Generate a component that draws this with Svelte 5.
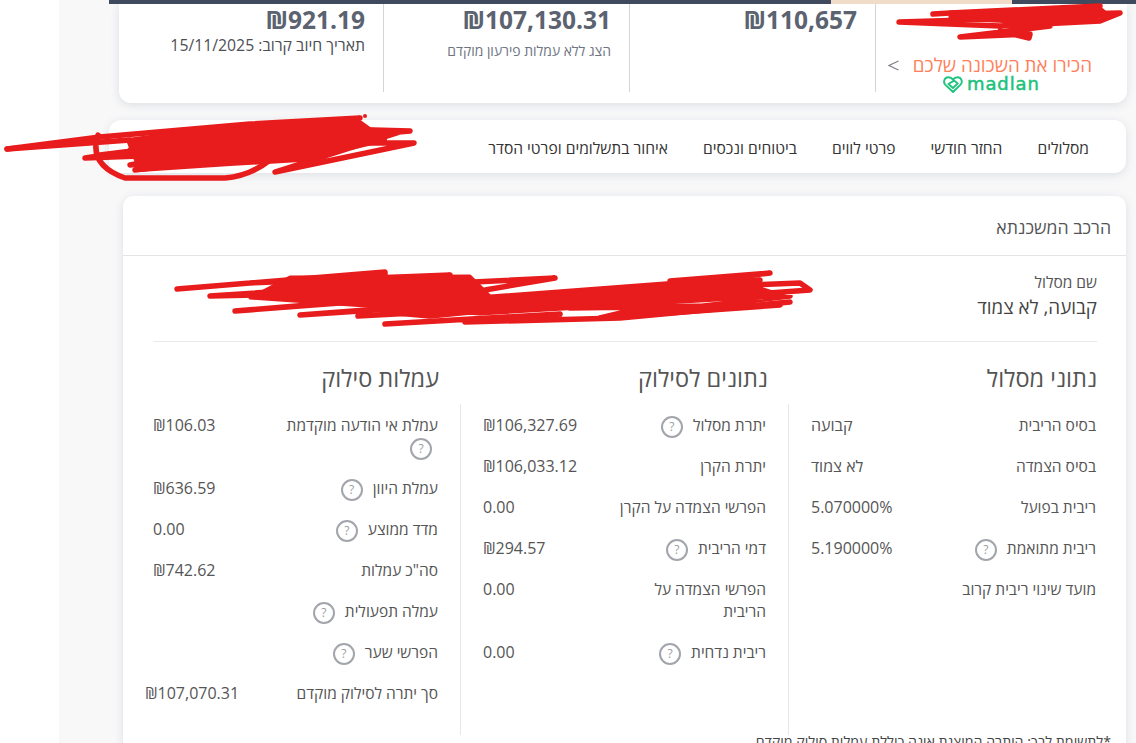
<script lang="ts">
	type Row = { label: string; value?: string; help?: boolean; wide?: boolean };

	const summary = [
		{ amount: '₪110,657' },
		{ amount: '₪107,130.31', note: 'הצג ללא עמלות פירעון מוקדם' },
		{ amount: '₪921.19', date: 'תאריך חיוב קרוב: 15/11/2025' }
	];

	const tabs = ['מסלולים', 'החזר חודשי', 'פרטי לווים', 'ביטוחים ונכסים', 'איחור בתשלומים ופרטי הסדר'];

	const columns: { title: string; rows: Row[] }[] = [
		{
			title: 'נתוני מסלול',
			rows: [
				{ label: 'בסיס הריבית', value: 'קבועה' },
				{ label: 'בסיס הצמדה', value: 'לא צמוד' },
				{ label: 'ריבית בפועל', value: '5.070000%' },
				{ label: 'ריבית מתואמת', value: '5.190000%', help: true },
				{ label: 'מועד שינוי ריבית קרוב' }
			]
		},
		{
			title: 'נתונים לסילוק',
			rows: [
				{ label: 'יתרת מסלול', value: '₪106,327.69', help: true },
				{ label: 'יתרת הקרן', value: '₪106,033.12' },
				{ label: 'הפרשי הצמדה על הקרן', value: '0.00' },
				{ label: 'דמי הריבית', value: '₪294.57', help: true },
				{ label: 'הפרשי הצמדה על הריבית', value: '0.00' },
				{ label: 'ריבית נדחית', value: '0.00', help: true }
			]
		},
		{
			title: 'עמלות סילוק',
			rows: [
				{ label: 'עמלת אי הודעה מוקדמת', value: '₪106.03', help: true },
				{ label: 'עמלת היוון', value: '₪636.59', help: true },
				{ label: 'מדד ממוצע', value: '0.00', help: true },
				{ label: 'סה"כ עמלות', value: '₪742.62' },
				{ label: 'עמלה תפעולית', help: true },
				{ label: 'הפרשי שער', help: true },
				{ label: 'סך יתרה לסילוק מוקדם', value: '₪107,070.31', wide: true }
			]
		}
	];

	// the red marker scribbles on top of the screenshot
	const scribbles = [
		'M933 14 L950 13 L1100 6 L1098 10 L1000 16 L1120 13 L1100 21 L1000 26 L899 22 L1040 18 M1050 26 L960 37 L1030 34 L1029 38 L1000 31',
		'M7 149 L100 137 L250 124 L360 118 L300 128 L410 131 L270 143 L414 143 L275 172 L400 132 L130 165 L340 125 L100 155 L360 135 L135 170 L300 150 L85 158 L330 122 L140 140 L350 148 L200 160 L370 130 L130 150',
		'M7 149 L130 140 M98 135 Q88 165 125 178 L225 178 Q250 176 270 160',
		'M177 289 L385 272 L385 276 L250 283 L450 275 L300 290 L210 296 L485 290 L555 278 L350 288 L485 292 L235 311 L345 302 L500 300 L300 315 L600 295 L690 290 L430 316 L385 312 L600 306 L650 298',
		'M670 281 L770 273 L630 290 L800 283 L810 290 L570 308 L780 305 L640 315 L700 285 L540 300 L760 280 L600 318 L790 296 L470 305',
		'M358 316 L470 310 M385 324 L560 314 M465 322 L620 318 L790 302'
	];
</script>

<div class="page" dir="rtl">
	<div class="side"></div>
	<main>
		<div class="strip"><i class="dark a"></i><i class="peach"></i><i class="dark b"></i></div>

		<section class="summary">
			<div class="cell promo">
				<a href="#madlan" class="promo-link">
					<span>הכירו את השכונה שלכם</span>
					<svg width="11" height="11" viewBox="0 0 11 11" fill="none" stroke="#7b808a" stroke-width="1.1">
						<path d="M10.5 1 L1 5.5 L10.5 10" />
					</svg>
				</a>
				<div class="madlan">
					<svg width="20" height="17" viewBox="0 0 20 17" fill="none" stroke="#1fc47f" stroke-width="1.9" stroke-linejoin="round">
						<path d="M10 16 L2.2 8.6 C-0.2 6 1.6 1.2 5.4 1.2 C7.4 1.2 9 2.2 10 3.6 C11 2.2 12.6 1.2 14.6 1.2 C18.4 1.2 20 6 17.6 8.6 Z" />
						<path d="M5.4 8 L10 12 L14.8 7.4 L11 4.6 L5.4 8 Z" />
					</svg>
					<span class="madlan-word">madlan</span>
				</div>
			</div>
			{#each summary as item}
				<div class="cell">
					<div class="amount" dir="ltr">{item.amount}</div>
					{#if item.note}<div class="note">{item.note}</div>{/if}
					{#if item.date}<div class="date">{item.date}</div>{/if}
				</div>
			{/each}
		</section>

		<nav aria-label="ניווט">
			{#each tabs as tab}
				<a href="#tab">{tab}</a>
			{/each}
		</nav>

		<section class="card">
			<h2>הרכב המשכנתא</h2>
			<div class="body">
				<div class="track">
					<div class="track-label">שם מסלול</div>
					<div class="track-name">קבועה, לא צמוד</div>
				</div>

				<div class="titles">
					{#each columns as col}
						<h3>{col.title}</h3>
					{/each}
				</div>

				<div class="cols">
					{#each columns as col}
						<div class="col">
							{#each col.rows as row}
								<div class="row">
									<div class="label">
										{row.label} {#if row.help}<span class="help">?</span>{/if}
									</div>
									{#if row.value}
										<div class="value" class:wide={row.wide} dir={/[א-ת]/.test(row.value) ? 'rtl' : 'ltr'}>{row.value}</div>
									{/if}
								</div>
							{/each}
						</div>
					{/each}
				</div>
				<p class="foot">*לתשומת לבך: היתרה המוצגת אינה כוללת עמלות סילוק מוקדם</p>
			</div>
		</section>
	</main>

	<svg class="marker" width="1136" height="743" viewBox="0 0 1136 743" fill="none" stroke="#e81c1c" stroke-linecap="round" stroke-linejoin="round" aria-hidden="true">
		{#each scribbles as d}
			<path {d} stroke-width="5.5" />
		{/each}
		<path d="M128 140 L230 126 L360 122 L385 140 L300 160 L230 164 L140 170 Z" fill="#e81c1c" stroke-width="4" />
		<path d="M950 12 L1100 8 L1110 16 L1040 24 L950 18 Z" fill="#e81c1c" stroke-width="3" />
		<path d="M290 277 L470 276 L490 296 L730 278 L785 296 L480 314 L250 298 Z" fill="#e81c1c" stroke-width="3" />
		<circle cx="365" cy="116" r="2" fill="#e81c1c" stroke="none" />
	</svg>
</div>

<style>
	:global(body) {
		background: #fff;
		font-family: 'Open Sans', 'Noto Sans', sans-serif;
	}

	.page {
		display: flex;
		height: 743px;
		overflow: hidden;
		position: relative;
	}

	.side {
		background: #fff;
		flex: 0 0 59px;
		order: 2;
	}

	main {
		background: #f8f8f9;
		flex: 1;
		min-width: 0;
	}

	.strip {
		display: flex;
		height: 4px;
		margin-left: 50px;
	}

	.strip .dark {
		background: #404a5e;
	}

	.strip .a {
		flex: 0 0 124px;
	}

	.strip .peach {
		background: #f0dcc9;
		flex: 0 0 181px;
	}

	.strip .b {
		flex: 1;
	}

	.summary {
		background: #fff;
		border-radius: 0 0 12px 12px;
		box-shadow: 0 2px 10px rgba(60, 70, 90, 0.14);
		display: flex;
		height: 99px;
		margin: 0 9px 0 60px;
	}

	.cell {
		border-left: 1px solid #d4d4d4;
		box-sizing: border-box;
		flex: 0 0 246px;
		height: 88px;
		padding: 1px 18px 0 0;
	}

	.cell:last-child {
		border-left: 0;
		flex: 1;
	}

	.promo {
		flex: 0 0 252px;
		padding: 0;
	}

	.promo-link {
		align-items: center;
		color: #ff7f5c;
		display: flex;
		font-size: 18.8px;
		gap: 14px;
		line-height: 20px;
		margin-top: 51px;
		padding-right: 35px;
		text-decoration: none;
	}

	.madlan {
		align-items: center;
		direction: ltr;
		display: flex;
		gap: 4px;
		height: 18px;
		margin: 0 0 0 67px;
	}

	.madlan-word {
		color: #1cc27c;
		font-family: 'DejaVu Sans', sans-serif;
		font-size: 18px;
		-webkit-text-stroke: 0.5px #1cc27c;
		letter-spacing: 0.9px;
		line-height: 18px;
	}

	.amount {
		color: #5b6270;
		font-size: 24.5px;
		font-weight: 700;
		line-height: 30px;
		text-align: right;
	}

	.note {
		color: #6d7482;
		font-size: 13.9px;
		line-height: 20px;
		margin-top: 6px;
	}

	.date {
		color: #4d4f55;
		font-size: 15.8px;
		line-height: 20px;
	}

	nav {
		align-items: center;
		background: #fff;
		border-radius: 12px;
		box-shadow: 0 2px 10px rgba(60, 70, 90, 0.14);
		box-sizing: border-box;
		display: flex;
		gap: 35px;
		height: 53px;
		margin: 17px 10px 0 50px;
		padding: 2px 37px 0 0;
	}

	nav a {
		color: #333;
		font-size: 15.6px;
		text-decoration: none;
	}

	.card {
		background: #fff;
		border-radius: 10px 10px 0 0;
		box-shadow: 0 2px 10px rgba(60, 70, 90, 0.14);
		height: 560px;
		margin: 23px 10px 0 64px;
	}

	h2 {
		border-bottom: 1px solid #e4e4e4;
		box-sizing: border-box;
		color: #555;
		font-size: 17.7px;
		font-weight: 400;
		height: 60px;
		line-height: 63px;
		margin: 0;
		padding-right: 15px;
	}

	.body {
		margin: 0 29px 0 30px;
	}

	.track {
		border-bottom: 1px solid #eaeaea;
		box-sizing: border-box;
		height: 86px;
		padding-top: 14px;
	}

	.track-label {
		color: #555;
		font-size: 15.5px;
		line-height: 24px;
	}

	.track-name {
		color: #444;
		font-size: 18.8px;
		line-height: 26px;
	}

	.titles,
	.cols {
		display: grid;
	}

	.titles {
		grid-template-columns: 308px 328px 308px;
		height: 62px;
	}

	.cols {
		grid-template-columns: 309px 328px 307px;
		height: 331px;
	}

	h3 {
		color: #555;
		font-size: 23.5px;
		font-weight: 400;
		line-height: 72px;
		margin: 0;
	}

	.titles h3:nth-child(2) {
		padding-right: 21px;
	}

	.titles h3:nth-child(3) {
		padding-right: 22px;
	}

	.col {
		box-sizing: border-box;
		padding: 10px 22px 0;
	}

	.col:first-child {
		border-left: 1px solid #e8e8e8;
		padding-right: 1px;
	}

	.col:nth-child(2) {
		border-left: 1px solid #e8e8e8;
	}

	.col:last-child {
		padding: 10px 22px 0 0;
	}

	.row {
		color: #555;
		display: flex;
		font-size: 16px;
		justify-content: space-between;
		line-height: 22px;
		margin-bottom: 19px;
	}

	.label {
		flex: 0 0 155px;
		font-size: 15.5px;
	}

	.value {
		flex: 1;
		text-align: left;
	}

	.value.wide {
		margin-left: -8px;
	}

	.help {
		border: 2px solid #a2a5ab;
		border-radius: 50%;
		box-sizing: border-box;
		color: #9a9da3;
		display: inline-block;
		font-size: 12px;
		height: 22px;
		line-height: 18px;
		margin: -4px 6px -4px 0;
		text-align: center;
		vertical-align: middle;
		width: 22px;
	}

	.foot {
		color: #444;
		font-size: 14.2px;
		line-height: 20px;
		margin: -3px -14px 0 0;
	}

	.marker {
		left: 0;
		pointer-events: none;
		position: absolute;
		top: 0;
	}
</style>
